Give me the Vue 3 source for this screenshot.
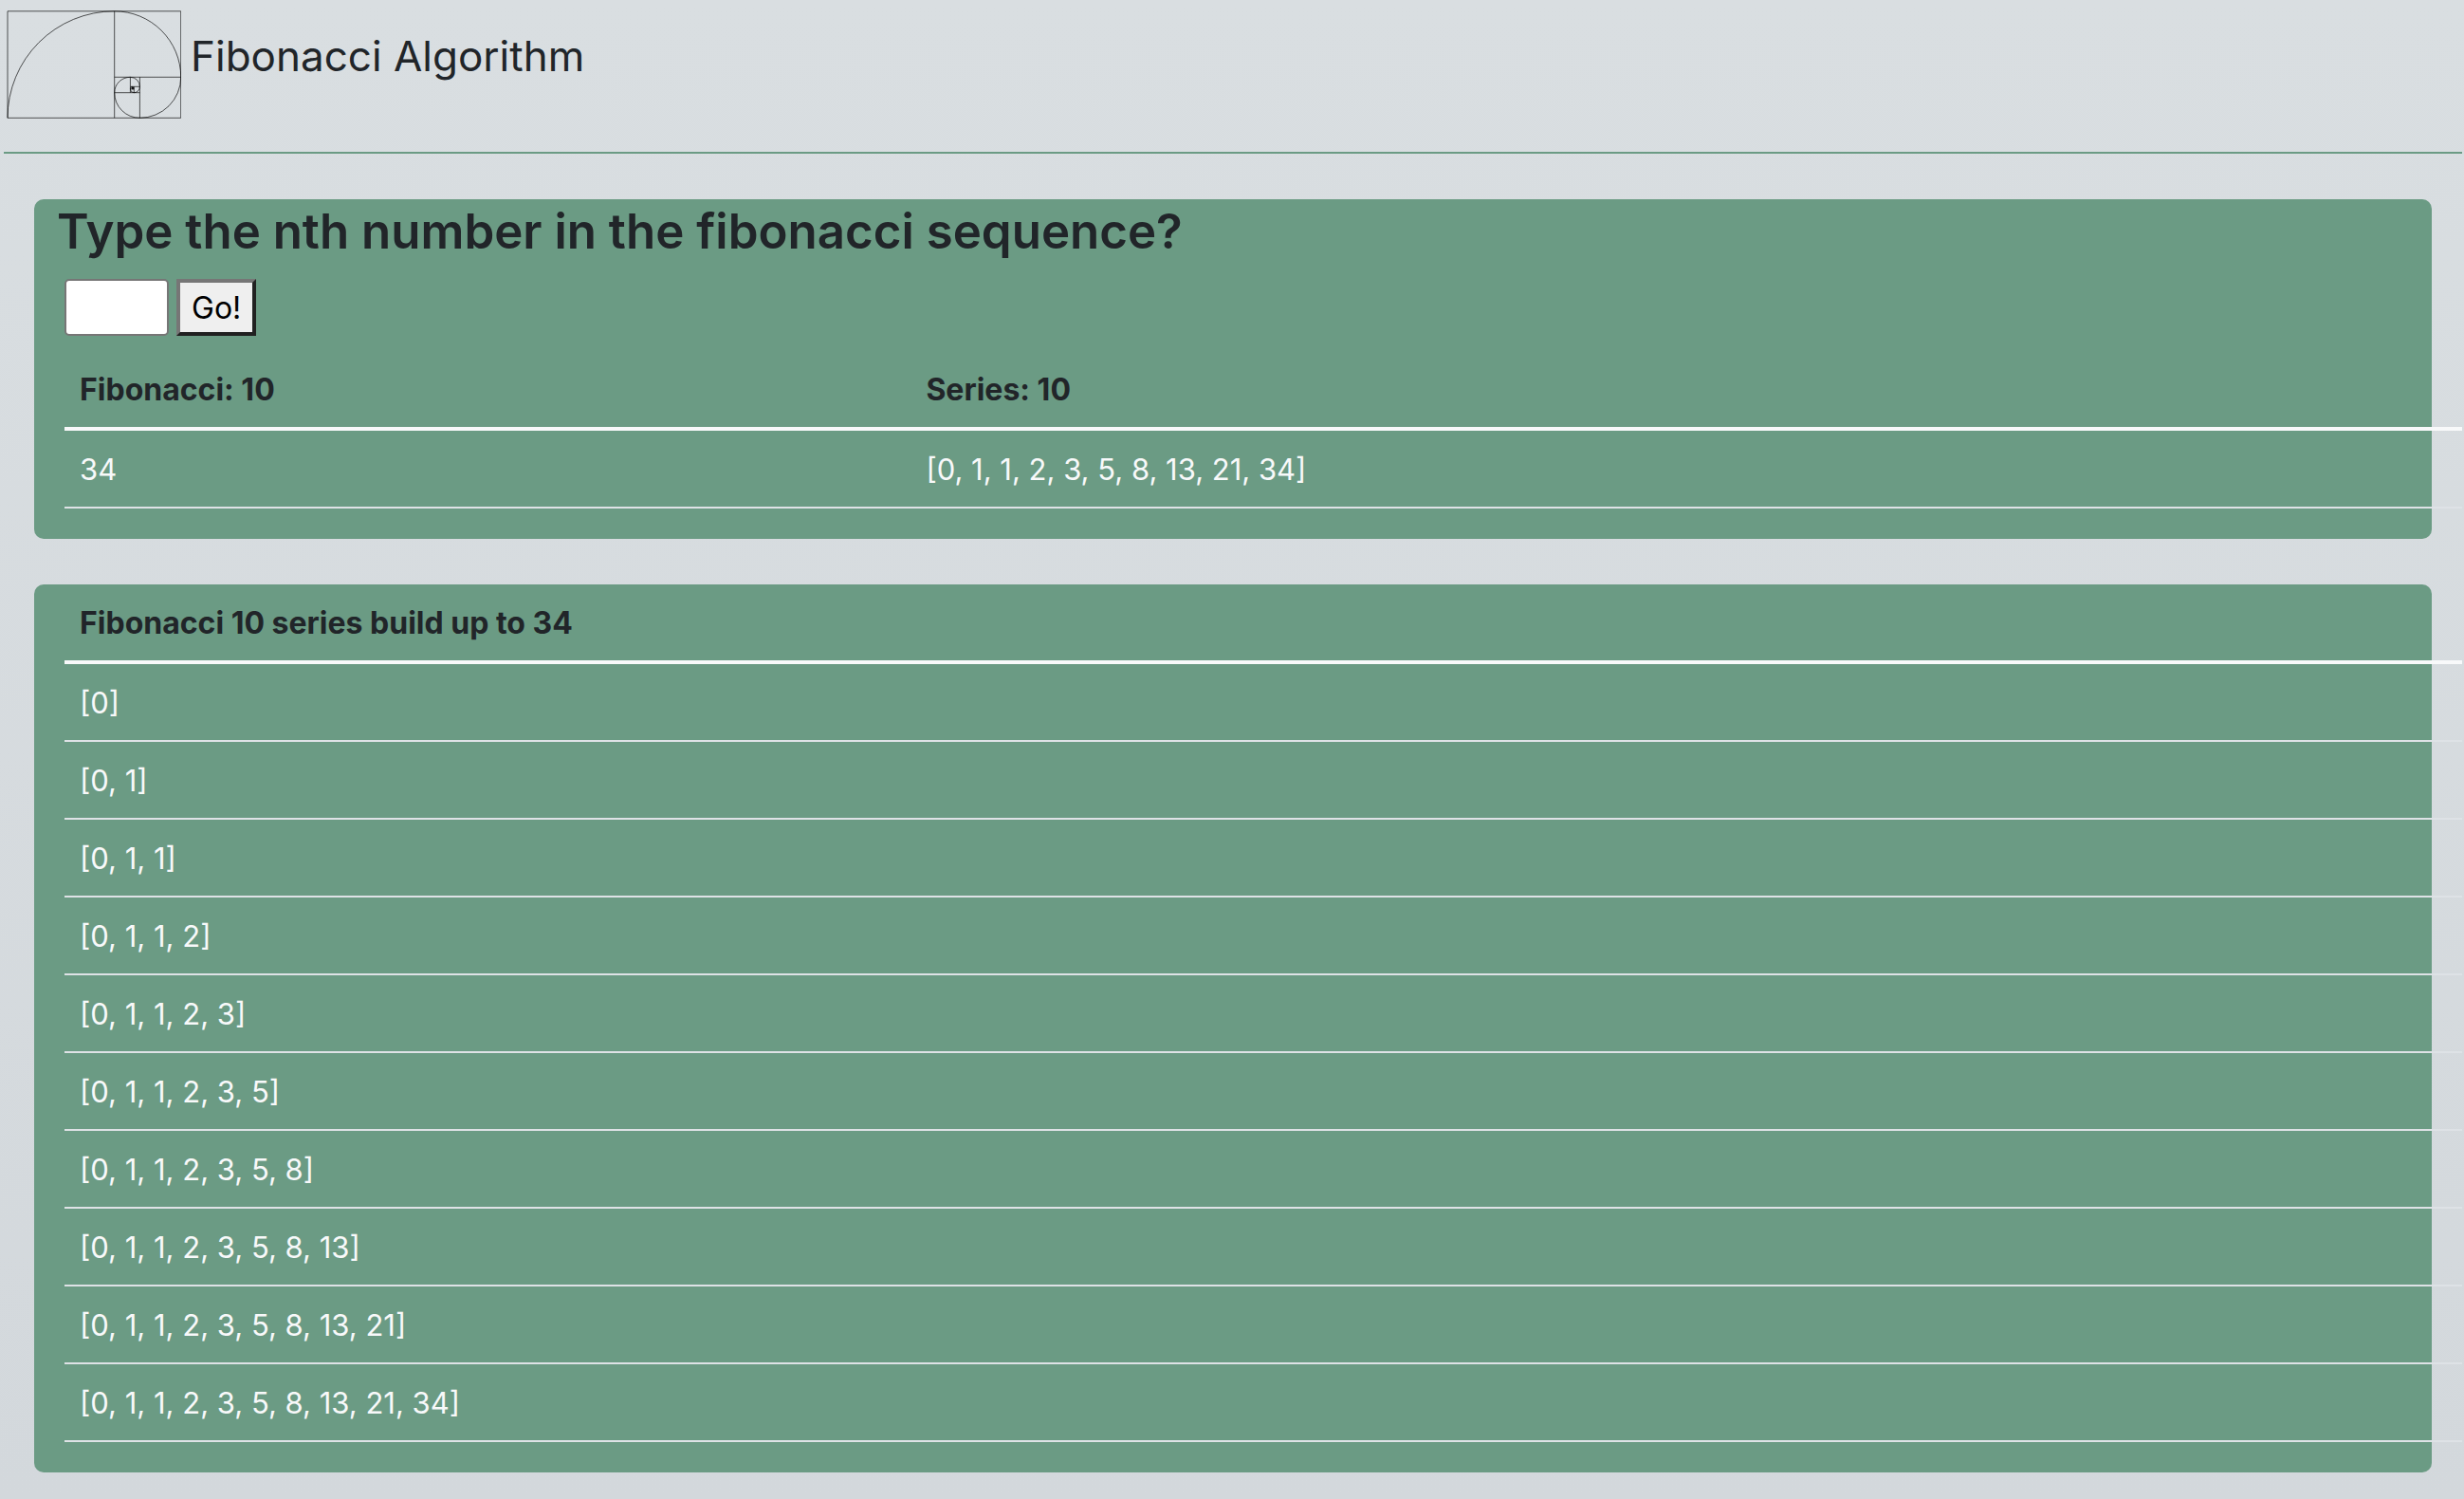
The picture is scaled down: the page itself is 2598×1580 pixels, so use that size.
<script setup>
import { computed, ref } from 'vue'

const entry = ref('')
const nth = ref(10)

function fibonacci(count) {
  const list = []
  for (let i = 0; i < count; i++) {
    list.push(i < 2 ? i : list[i - 1] + list[i - 2])
  }
  return list
}

const format = (list) => `[${list.join(', ')}]`

const series = computed(() => fibonacci(nth.value))
const last = computed(() => series.value[series.value.length - 1])
const steps = computed(() => series.value.map((_, i) => format(series.value.slice(0, i + 1))))

function submit() {
  const value = parseInt(entry.value, 10)
  if (value > 0) nth.value = value
}
</script>

<template>
  <div class="page">
    <header class="top">
      <svg class="logo" viewBox="0 0 184 114" aria-hidden="true">
        <g fill="none" stroke="#000" stroke-opacity="0.65" stroke-width="1">
          <path d="M1 .8H183.7V113.3H1Z" />
          <path d="M113.7 .8V113.3M113.7 70.3H183.7M140.4 70.3V113.3M113.7 86.7H140.4M130.4 70.3V86.7M130.4 80.3H140.4M134.3 80.3V86.7M130.4 82.8H134.3M132.8 80.3V82.8" />
          <path d="M1 113.3A112.7 112.5 0 0 1 113.7 .8A70 69.5 0 0 1 183.7 70.3A43.3 43 0 0 1 140.4 113.3A26.7 26.6 0 0 1 113.7 86.7A16.7 16.4 0 0 1 130.4 70.3A10 10 0 0 1 140.4 80.3A6.1 6.4 0 0 1 134.3 86.7A3.9 3.9 0 0 1 130.4 82.8A2.4 2.5 0 0 1 132.8 80.3" />
        </g>
        <circle cx="133" cy="82" r="1.4" fill="#111" />
      </svg>
      <h1 class="title">Fibonacci Algorithm</h1>
    </header>

    <main>
      <section class="card">
        <h2 class="question"><label for="nth">Type the nth number in the fibonacci sequence?</label></h2>
        <form class="form" @submit.prevent="submit">
          <input id="nth" v-model="entry" class="number" type="text" />
          <button class="go" type="submit">Go!</button>
        </form>
        <table class="table result">
          <thead>
            <tr>
              <th scope="col">Fibonacci: {{ nth }}</th>
              <th scope="col">Series: {{ nth }}</th>
            </tr>
          </thead>
          <tbody>
            <tr>
              <td>{{ last }}</td>
              <td>{{ format(series) }}</td>
            </tr>
          </tbody>
        </table>
      </section>

      <section class="card">
        <table class="table">
          <thead>
            <tr>
              <th scope="col">Fibonacci {{ nth }} series build up to {{ last }}</th>
            </tr>
          </thead>
          <tbody>
            <tr v-for="step in steps" :key="step">
              <td>{{ step }}</td>
            </tr>
          </tbody>
        </table>
      </section>
    </main>
  </div>
</template>

<style>
body {
  margin: 0;
}
</style>

<style scoped>
.page {
  box-sizing: border-box;
  min-height: 100vh;
  padding: 0 2px 28px 4px;
  background: linear-gradient(#d9dee1, #d3d8dc);
  color: #212529;
  font-family: Inter, "Liberation Sans", sans-serif;
  font-size: 32px;
  line-height: 48px;
}

.top {
  display: flex;
  align-items: flex-start;
  gap: 10px;
  box-sizing: border-box;
  height: 162px;
  padding: 11px 0 0 3px;
  border-bottom: 2px solid #6b9b84;
}

.logo {
  width: 184px;
  height: 114px;
}

.title {
  margin: 18px 0 0;
  font-size: 44px;
  font-weight: 400;
  line-height: 60px;
}

.card {
  margin: 48px 32px 0;
  padding: 0 0 32px 32px;
  border-radius: 10px;
  background: #6b9b84;
}

.question {
  margin: 0 0 16px -8px;
  font-size: 51px;
  font-weight: 600;
  line-height: 68px;
}

.form {
  display: flex;
  gap: 8px;
  margin-bottom: 16px;
}

.number,
.go {
  box-sizing: border-box;
  height: 60px;
  margin: 0;
  font: inherit;
}

.number {
  width: 110px;
  padding: 2px 4px;
  border: 2px solid #767676;
  border-radius: 5px;
  background: #fff;
}

.go {
  padding: 2px 12px 0;
  border: 4px solid;
  border-color: #767676 #212121 #212121 #767676;
  border-radius: 0;
  background: #efefef;
  color: #000;
}

/* Tables run past the card's right edge to the end of the page. */
.table {
  width: calc(100% + 32px);
  border-spacing: 0;
}

.table th,
.table td {
  box-sizing: border-box;
  padding: 17px 16px 15px;
  text-align: left;
}

.table th {
  border-bottom: 4px solid #f8f9fa;
  font-weight: 700;
}

.table td {
  border-bottom: 2px solid #dee2e6;
  color: #f8f9fa;
  font-size: 31px;
}

.result th:first-child {
  width: 35.3%;
}
</style>
